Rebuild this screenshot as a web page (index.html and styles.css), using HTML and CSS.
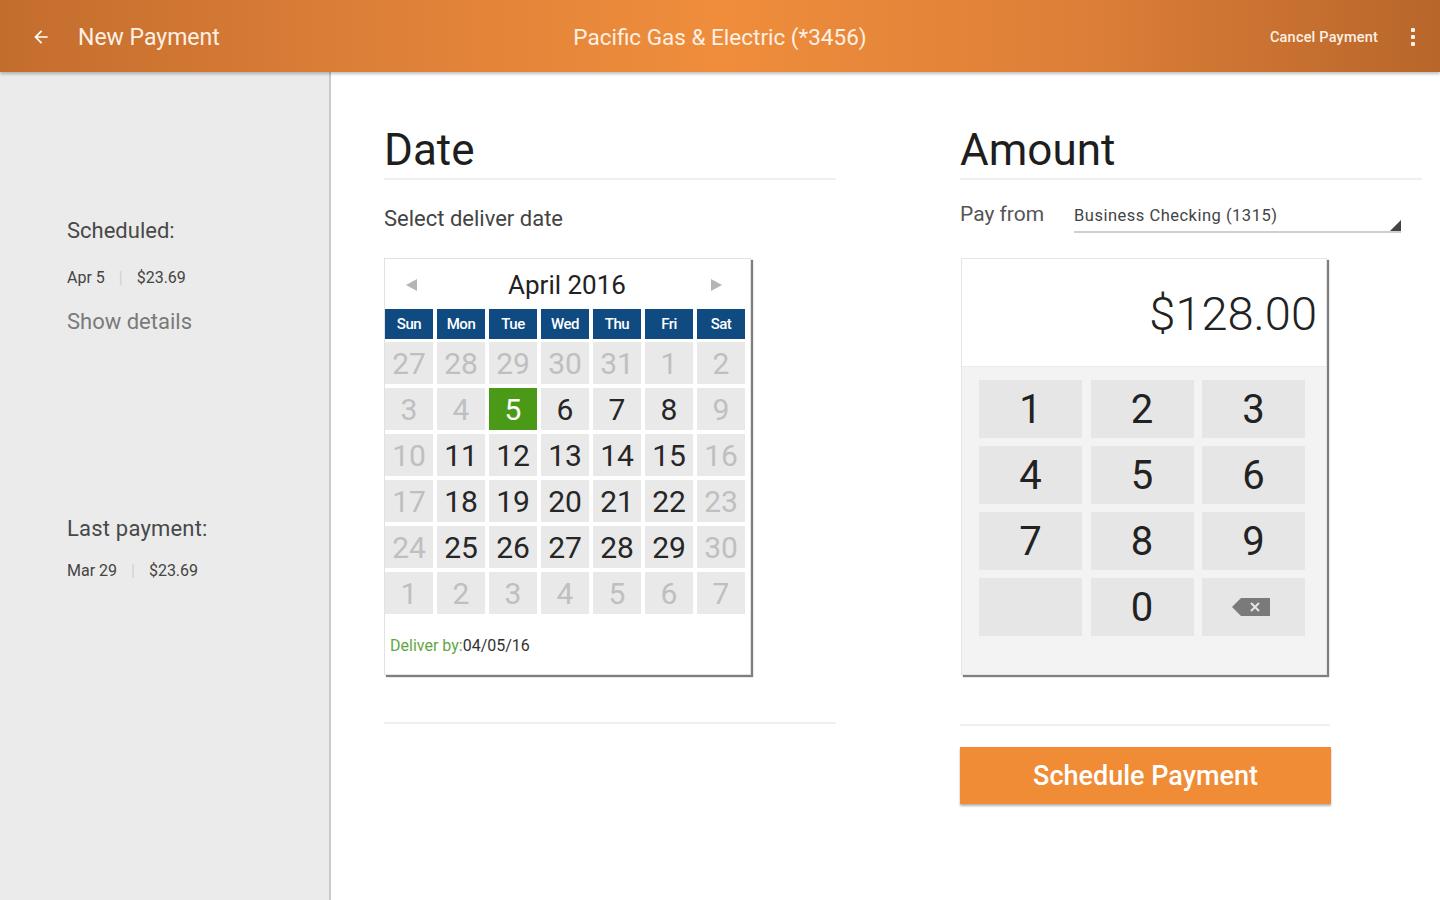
FILE: index.html
```html
<!DOCTYPE html>
<html>
<head>
<meta charset="utf-8">
<link rel="stylesheet" href="styles.css">
</head>
<body>
<header class="appbar">
  <div class="bar-left">
    <svg class="back" width="20" height="20" viewBox="0 0 24 24"><path d="M20 11H7.8l5.6-5.6L12 4l-8 8 8 8 1.4-1.4L7.8 13H20z" fill="#fff"/></svg>
    <span class="bar-title">New Payment</span>
  </div>
  <div class="bar-center">Pacific Gas &amp; Electric (*3456)</div>
  <div class="bar-right">
    <span class="cancel">Cancel Payment</span>
    <span class="kebab"><i></i><i></i><i></i></span>
  </div>
</header>
<div class="main">
  <aside class="sidebar">
    <div class="side-label">Scheduled:</div>
    <div class="side-meta">Apr 5 <span class="sep">|</span> $23.69</div>
    <div class="side-link">Show details</div>
    <div class="side-label last">Last payment:</div>
    <div class="side-meta tight">Mar 29 <span class="sep">|</span> $23.69</div>
  </aside>
  <section class="content">
    <div class="col date-col">
      <h1 class="heading">Date</h1>
      <div class="sub">Select deliver date</div>
      <div class="calendar">
        <div class="cal-head">
          <span class="arrow left"></span>
          <span class="month">April 2016</span>
          <span class="arrow right"></span>
        </div>
        <div class="weekdays">
          <span>Sun</span><span>Mon</span><span>Tue</span><span>Wed</span><span>Thu</span><span>Fri</span><span>Sat</span>
        </div>
        <div class="days">
          <span class="out">27</span><span class="out">28</span><span class="out">29</span><span class="out">30</span><span class="out">31</span><span class="out">1</span><span class="out">2</span>
          <span class="out">3</span><span class="out">4</span><span class="sel">5</span><span>6</span><span>7</span><span>8</span><span class="out">9</span>
          <span class="out">10</span><span>11</span><span>12</span><span>13</span><span>14</span><span>15</span><span class="out">16</span>
          <span class="out">17</span><span>18</span><span>19</span><span>20</span><span>21</span><span>22</span><span class="out">23</span>
          <span class="out">24</span><span>25</span><span>26</span><span>27</span><span>28</span><span>29</span><span class="out">30</span>
          <span class="out">1</span><span class="out">2</span><span class="out">3</span><span class="out">4</span><span class="out">5</span><span class="out">6</span><span class="out">7</span>
        </div>
        <div class="cal-foot"><span class="green">Deliver by:</span>04/05/16</div>
      </div>
      <div class="rule"></div>
    </div>
    <div class="col amount-col">
      <h1 class="heading">Amount</h1>
      <div class="payfrom">
        <span class="pf-label">Pay from</span>
        <div class="select"><span>Business Checking (1315)</span><i class="tri"></i></div>
      </div>
      <div class="keypad">
        <div class="display">$128.00</div>
        <div class="keys">
          <span>1</span><span>2</span><span>3</span>
          <span>4</span><span>5</span><span>6</span>
          <span>7</span><span>8</span><span>9</span>
          <span></span><span>0</span>
          <span class="bksp"><svg width="38" height="18" viewBox="0 0 38 18"><path d="M9 0H38V18H9L0 9Z" fill="#7a7a7a"/><path d="M19 5l8 8M27 5l-8 8" stroke="#e6e6e6" stroke-width="2"/></svg></span>
        </div>
      </div>
      <div class="rule short"></div>
      <button class="schedule">Schedule Payment</button>
    </div>
  </section>
</div>
</body>
</html>
```
FILE: styles.css
```css
* { box-sizing: border-box; }
html, body { margin: 0; padding: 0; }
body {
  width: 1440px;
  height: 900px;
  overflow: hidden;
  font-family: Roboto, "Noto Sans", Arial, sans-serif;
  background: #fff;
  color: #333;
}
.appbar {
  height: 72px;
  display: grid;
  grid-template-columns: 1fr auto 1fr;
  align-items: center;
  background: linear-gradient(to right, #c36d2d 0%, #dc7f38 25%, #ef8d3b 50%, #dd7f38 75%, #b8662b 100%);
  box-shadow: 0 2px 3px rgba(0,0,0,0.25);
  position: relative;
  z-index: 2;
  color: #fdf0e4;
}
.bar-left { display: flex; align-items: center; padding-left: 31px; }
.back { margin-right: 27px; margin-top: 1px; }
.bar-title { font-size: 23px; margin-top: 2px; }
.bar-center { font-size: 22.5px; text-align: center; margin-top: 2px; }
.bar-right { display: flex; justify-content: flex-end; align-items: center; padding-right: 25px; }
.cancel { font-size: 14.5px; font-weight: 500; margin-top: 2px; letter-spacing: 0.2px; }
.kebab { display: flex; flex-direction: column; gap: 3px; margin-left: 33px; margin-top: 2px; }
.kebab i { width: 4px; height: 4px; background: #fdf0e4; border-radius: 1px; display: block; }

.main { display: flex; height: 828px; }
.sidebar {
  width: 331px;
  background: #ebebeb;
  border-right: 2px solid #c9c9c9;
  padding: 144px 0 0 67px;
  color: #444;
}
.side-label { font-size: 22px; line-height: 30px; color: #484848; }
.side-label.last { margin-top: 178px; letter-spacing: 0.2px; }
.side-meta { font-size: 16px; line-height: 20px; margin-top: 22px; color: #444; }
.side-meta.tight { margin-top: 17px; }
.sep { color: #d0d0d0; margin: 0 10px; }
.side-link { font-size: 22px; line-height: 28px; margin-top: 20px; color: #7a7a7a; }

.content { display: flex; padding: 52px 0 0 53px; gap: 124px; }
.col { display: flex; flex-direction: column; }
.date-col { width: 452px; }
.amount-col { width: 462px; }
.heading {
  margin: 0;
  font-weight: 400;
  font-size: 44px;
  line-height: 52px;
  color: #1e1e1e;
  padding-bottom: 2px;
  border-bottom: 2px solid #f0f0f0;
}
.sub { font-size: 22px; line-height: 28px; margin-top: 25px; color: #444; }

.calendar {
  margin-top: 25px;
  width: 367px;
  border: 1px solid #e2e2e2;
  padding-right: 4px;
  box-shadow: 2px 2px 1px rgba(0,0,0,0.5);
  background: #fff;
}
.cal-head {
  height: 50px;
  display: flex;
  align-items: center;
  justify-content: space-between;
  padding: 2px 24px 0 21px;
}
.month { font-size: 26px; color: #222; margin-left: 6px; }
.arrow { width: 0; height: 0; border-top: 6px solid transparent; border-bottom: 6px solid transparent; }
.arrow.left { border-right: 11px solid #b5b5b5; }
.arrow.right { border-left: 11px solid #b5b5b5; }
.weekdays, .days {
  display: grid;
  grid-template-columns: repeat(7, 48px);
  column-gap: 4px;
}
.weekdays span {
  height: 30px;
  background: #0f4a80;
  color: #fff;
  font-size: 15px;
  font-weight: 500;
  display: flex;
  align-items: center;
  justify-content: center;
  letter-spacing: -0.5px;
}
.days { margin-top: 3px; row-gap: 4px; }
.days span {
  height: 42px;
  background: #e9e9e9;
  font-size: 30px;
  color: #262626;
  display: flex;
  align-items: center;
  justify-content: center;
}
.days span.out { color: #bfbfbf; }
.days span.sel { background: #4a9a18; color: #fff; }
.cal-foot { padding: 22px 0 18px 5px; font-size: 16px; line-height: 20px; color: #333; }
.green { color: #5ea844; }
.rule { margin-top: 47px; height: 2px; background: #f0f0f0; }
.rule.short { width: 370px; margin-top: 49px; }

.payfrom { display: flex; align-items: center; margin-top: 20px; height: 28px; }
.pf-label { font-size: 21px; color: #555; width: 114px; }
.select {
  position: relative;
  width: 327px;
  font-size: 16.5px;
  letter-spacing: 0.5px;
  color: #444;
  padding-bottom: 6px;
  border-bottom: 2px solid #cfcfcf;
  margin-top: 10px;
}
.tri {
  position: absolute;
  right: 0;
  bottom: 0;
  width: 0; height: 0;
  border-left: 11px solid transparent;
  border-bottom: 11px solid #444;
}
.keypad {
  margin-top: 30px;
  margin-left: 1px;
  width: 366px;
  border: 1px solid #e4e4e4;
  box-shadow: 2px 2px 1px rgba(0,0,0,0.5);
}
.display {
  height: 108px;
  background: #fff;
  font-size: 47px;
  font-weight: 300;
  color: #222;
  text-align: right;
  padding: 27px 9px 0 0;
  border-bottom: 1px solid #ececec;
}
.keys {
  background: #f3f3f3;
  display: grid;
  grid-template-columns: repeat(3, 103px);
  grid-auto-rows: 58px;
  column-gap: 8.5px;
  row-gap: 8px;
  padding: 13px 0 38px 17px;
}
.keys span {
  background: #e6e6e6;
  font-size: 40px;
  color: #222;
  display: flex;
  align-items: center;
  justify-content: center;
}
.keys span.bksp { padding-right: 6px; }
.schedule {
  margin-top: 21px;
  width: 371px;
  height: 57px;
  border: none;
  background: #f08b36;
  color: #fff;
  font-family: Roboto, Arial, sans-serif;
  font-size: 27px;
  font-weight: 500;
  box-shadow: 0 2px 2px rgba(0,0,0,0.3);
  padding: 0;
}
```
